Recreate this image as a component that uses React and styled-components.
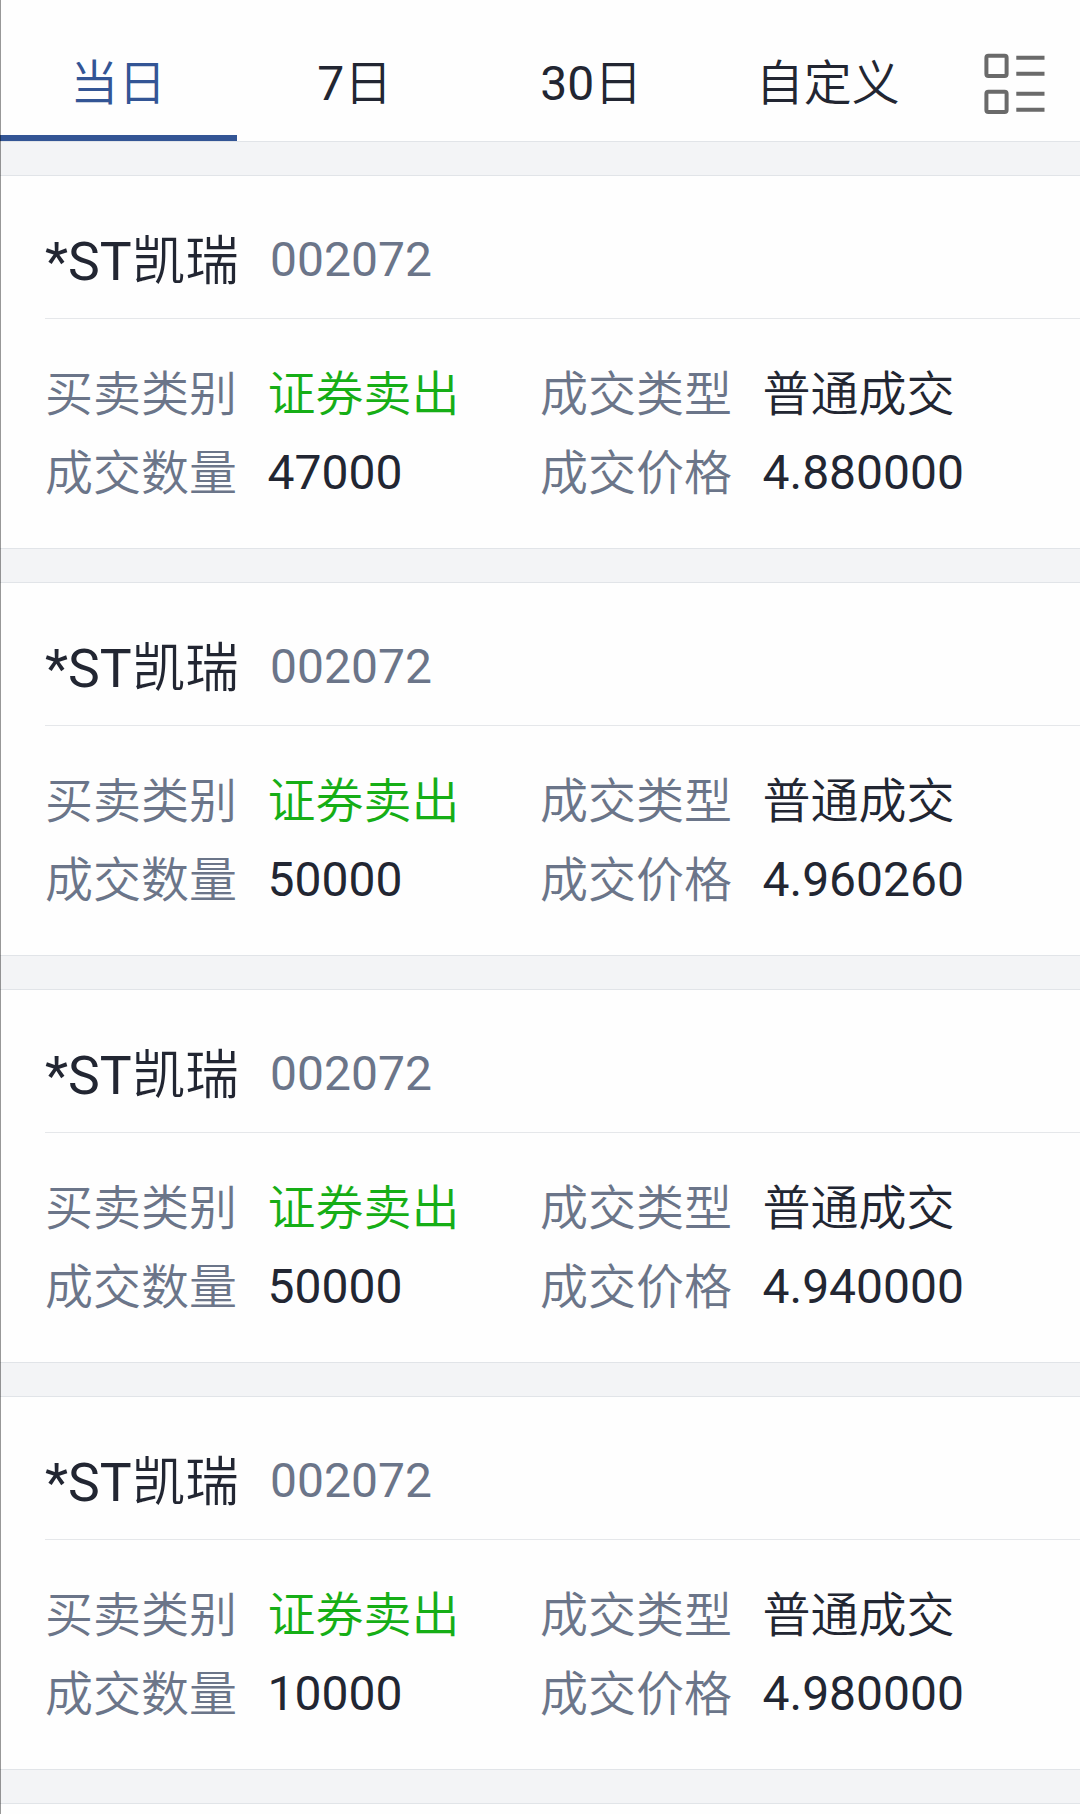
import React from "react";
import styled, { createGlobalStyle } from "styled-components";

const GlobalStyle = createGlobalStyle`
  * { box-sizing: border-box; }
  body {
    margin: 0;
    background: #f3f4f7;
    font-family: Roboto, "Noto Sans CJK SC DemiLight", "Noto Sans CJK SC", sans-serif;
    color: #222632;
  }
`;

const Page = styled.div`
  position: relative;
  width: 1080px;
  height: 1814px;
  overflow: hidden;
  background: #f3f4f6;

  &::before {
    content: "";
    position: absolute;
    z-index: 1;
    inset: 0 auto 0 0;
    width: 1px;
    background: rgba(0, 0, 0, 0.4);
  }
`;

const TabBar = styled.nav`
  display: flex;
  height: 142px;
  background: #fefefe;
  border-bottom: 1px solid #e1e4e8;
`;

const Tab = styled.button`
  width: 236.5px;
  padding: 26px 0 0;
  border: 0;
  background: none;
  box-shadow: ${(p) => (p.$active ? "inset 0 -6px 0 #335595" : "none")};
  color: ${(p) => (p.$active ? "#335595" : "#222632")};
  font: inherit;
  font-size: 48px;
  line-height: 116px;
  text-align: center;
  white-space: nowrap;
`;

const LayoutButton = styled.button`
  flex: 1;
  display: flex;
  align-items: flex-start;
  padding: 53px 0 0 38px;
  border: 0;
  background: none;
`;

const Card = styled.article`
  height: 374px;
  margin-top: 33px;
  padding-left: 45px;
  background: #fefefe;
  border: solid #e1e4e8;
  border-width: 1px 0;
`;

const CardHeader = styled.header`
  display: flex;
  height: 143px;
  padding-top: 28px;
  border-bottom: 1px solid #e5e7ea;
  line-height: 115px;
`;

const StockName = styled.span`
  width: 225px;
  font-size: 53.5px;
  white-space: nowrap;
`;

const StockCode = styled.span`
  color: #6b7589;
  font-size: 48px;
  line-height: 112px;
`;

const Details = styled.dl`
  display: grid;
  grid-template-columns: 222.5px 272.5px 222.5px 1fr;
  grid-auto-rows: 79px;
  margin: 0;
  padding-top: 35px;
  font-size: 48px;
  line-height: 79px;
  white-space: nowrap;
`;

const Label = styled.dt`
  padding-top: 1px;
  color: #6b7589;
`;

const Value = styled.dd`
  margin: 0;
  padding-top: ${(p) => (p.$numeric ? "0" : "1px")};
  color: ${(p) => (p.$sell ? "#16ae16" : "#222632")};
`;

const tabs = ["当日", "7日", "30日", "自定义"];

const trades = [
  { amount: "47000", price: "4.880000" },
  { amount: "50000", price: "4.960260" },
  { amount: "50000", price: "4.940000" },
  { amount: "10000", price: "4.980000" },
];

function LayoutIcon() {
  return (
    <svg width="62" height="62" viewBox="0 0 62 62" fill="none" stroke="#6a6a6a" strokeWidth="4">
      <rect x="2.4" y="2.7" width="20.2" height="20.2" rx="2" />
      <rect x="2.4" y="38.7" width="20.2" height="20.2" rx="2" />
      <path d="M32.3 4.7h28.2M32.3 20.7h28.2M32.3 40.7h28.2M32.3 56.7h28.2" />
    </svg>
  );
}

function TradeCard({ trade }) {
  return (
    <Card>
      <CardHeader>
        <StockName>*ST凯瑞</StockName>
        <StockCode>002072</StockCode>
      </CardHeader>
      <Details>
        <Label>买卖类别</Label>
        <Value $sell>证券卖出</Value>
        <Label>成交类型</Label>
        <Value>普通成交</Value>
        <Label>成交数量</Label>
        <Value $numeric>{trade.amount}</Value>
        <Label>成交价格</Label>
        <Value $numeric>{trade.price}</Value>
      </Details>
    </Card>
  );
}

export default function App() {
  return (
    <Page>
      <GlobalStyle />
      <TabBar>
        {tabs.map((name, i) => (
          <Tab key={name} $active={i === 0}>{name}</Tab>
        ))}
        <LayoutButton aria-label="切换布局">
          <LayoutIcon />
        </LayoutButton>
      </TabBar>
      {trades.map((trade, i) => (
        <TradeCard key={i} trade={trade} />
      ))}
      <Card />
    </Page>
  );
}
